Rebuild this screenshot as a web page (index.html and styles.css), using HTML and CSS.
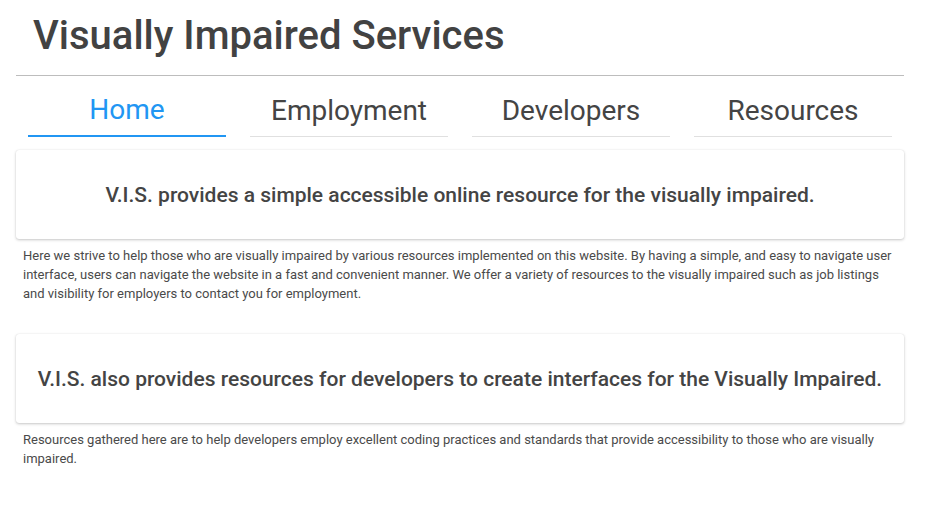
FILE: index.html
```html
<!DOCTYPE html>
<html lang="en">
<head>
<meta charset="utf-8">
<title>Visually Impaired Services</title>
<link rel="stylesheet" href="styles.css">
</head>
<body>
<div class="page">
  <header class="header">
    <h1 class="title">Visually Impaired Services</h1>
  </header>
  <nav class="tabs">
    <a class="tab active" href="#">Home</a>
    <a class="tab" href="#">Employment</a>
    <a class="tab" href="#">Developers</a>
    <a class="tab" href="#">Resources</a>
  </nav>
  <section class="section">
    <div class="card"><h2 class="card-title">V.I.S. provides a simple accessible online resource for the visually impaired.</h2></div>
    <p class="text">Here we strive to help those who are visually impaired by various resources implemented on this website. By having a simple, and easy to navigate user interface, users can navigate the website in a fast and convenient manner. We offer a variety of resources to the visually impaired such as job listings and visibility for employers to contact you for employment.</p>
  </section>
  <section class="section">
    <div class="card"><h2 class="card-title">V.I.S. also provides resources for developers to create interfaces for the Visually Impaired.</h2></div>
    <p class="text">Resources gathered here are to help developers employ excellent coding practices and standards that provide accessibility to those who are visually impaired.</p>
  </section>
</div>
</body>
</html>
```
FILE: styles.css
```css
html, body {
  margin: 0;
  padding: 0;
  background: #ffffff;
}
body {
  font-family: Roboto, "Liberation Sans", sans-serif;
  color: #444444;
}
.page {
  width: 888px;
  margin-left: 16px;
}
.header {
  border-bottom: 1px solid #bdbdbd;
  padding: 0 0 0 17px;
  height: 75px;
}
.title {
  margin: 0;
  padding-top: 12px;
  font-size: 40px;
  line-height: 48px;
  font-weight: 500;
  color: #424242;
}
.tabs {
  display: flex;
  gap: 24px;
  padding: 0 12px;
  height: 61px;
}
.tab {
  flex: 1;
  display: flex;
  align-items: center;
  justify-content: center;
  padding-top: 8px;
  font-size: 28px;
  color: #444444;
  text-decoration: none;
  border-bottom: 1px solid #e0e0e0;
}
.tab.active {
  color: #2196f3;
  border-bottom: 2px solid #2196f3;
}
.section {
  margin-top: 13px;
}
.section + .section {
  margin-top: 31px;
}
.card {
  height: 89px;
  display: flex;
  align-items: center;
  justify-content: center;
  background: #fff;
  border-radius: 3px;
  box-shadow: 0 1px 3px rgba(0,0,0,0.22), 0 0 1px rgba(0,0,0,0.12);
}
.card-title {
  margin: 0;
  font-size: 21px;
  font-weight: 500;
  color: #444444;
}
.text {
  margin: 7px 0 0 0;
  padding: 0 7px;
  font-size: 13px;
  line-height: 19px;
  color: #4a4a4a;
}
```
